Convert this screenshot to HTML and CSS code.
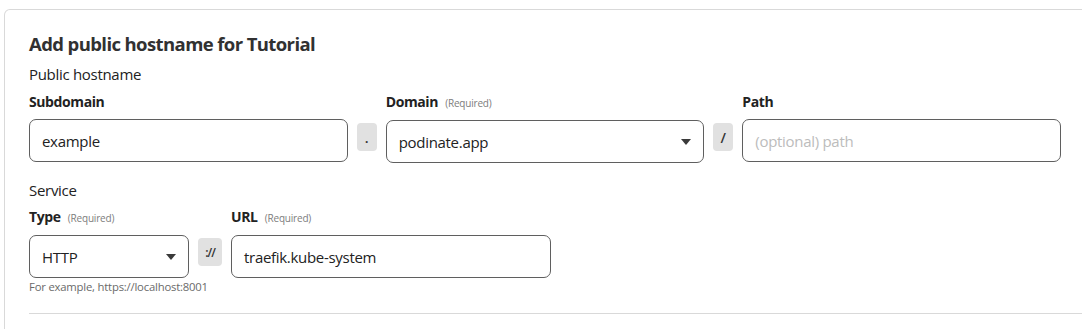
FILE: index.html
```html
<!DOCTYPE html>
<html lang="en">
<head>
  <meta charset="UTF-8" />
  <title>Add public hostname</title>
  <link rel="stylesheet" href="styles.css">
</head>
<body>
  <div class="card">
    <h2 class="card-title">Add public hostname for Tutorial</h2>

    <div class="section-title">Public hostname</div>
    <div class="field-row hostname-row">
      <div class="field">
        <label class="field-label">Subdomain</label>
        <div class="input">example</div>
      </div>
      <div class="sep">.</div>
      <div class="field">
        <label class="field-label">Domain <span class="req">(Required)</span></label>
        <div class="input select">
          <span>podinate.app</span>
          <span class="caret"></span>
        </div>
      </div>
      <div class="sep">/</div>
      <div class="field">
        <label class="field-label">Path</label>
        <div class="input placeholder">(optional) path</div>
      </div>
    </div>

    <div class="section-title service-title">Service</div>
    <div class="field-row service-row">
      <div class="field type-field">
        <label class="field-label">Type <span class="req">(Required)</span></label>
        <div class="input select">
          <span>HTTP</span>
          <span class="caret"></span>
        </div>
        <div class="help">For example, https://localhost:8001</div>
      </div>
      <div class="sep sep-wide">://</div>
      <div class="field url-field">
        <label class="field-label">URL <span class="req">(Required)</span></label>
        <div class="input">traefik.kube-system</div>
      </div>
    </div>

    <hr class="divider">
  </div>
</body>
</html>
```

FILE: styles.css
```css
* {
  box-sizing: border-box;
}

body {
  margin: 0;
  background: #ffffff;
  font-family: 'Open Sans', 'Noto Sans', sans-serif;
  color: #222;
  overflow: hidden;
}

.card {
  margin: 9px 0 0 4px;
  width: 1120px;
  height: 320px;
  border: 1px solid #d9d9d9;
  border-bottom: none;
  border-radius: 6px 6px 0 0;
  padding: 22px 24px 0 24px;
}

.card-title {
  margin: 0;
  font-size: 18.5px;
  line-height: 24px;
  font-weight: 700;
  color: #313131;
  letter-spacing: -0.6px;
}

.section-title {
  margin-top: 8px;
  font-size: 15px;
  line-height: 20px;
  color: #222;
  letter-spacing: -0.3px;
}

.service-title {
  margin-top: 17px;
}

.field-row {
  display: flex;
  gap: 9px;
  width: 1032px;
}

.field {
  flex: 1;
  min-width: 0;
  display: flex;
  flex-direction: column;
}

.field-label {
  margin-top: 8px;
  font-size: 14px;
  line-height: 20px;
  font-weight: 700;
  color: #222;
  letter-spacing: -0.4px;
}

.req {
  margin-left: 4px;
  font-size: 10px;
  font-weight: 400;
  color: #7d7d7d;
  letter-spacing: -0.2px;
}

.input {
  margin-top: 7px;
  height: 43px;
  border: 1px solid #5f5f5f;
  border-radius: 7px;
  padding: 0 12px;
  display: flex;
  align-items: center;
  font-size: 15px;
  color: #222;
  letter-spacing: -0.3px;
}

.placeholder {
  color: #bcbcbc;
}

.select {
  justify-content: space-between;
}

.caret {
  width: 0;
  height: 0;
  border-left: 5px solid transparent;
  border-right: 5px solid transparent;
  border-top: 6px solid #3a3a3a;
}

.sep {
  align-self: flex-start;
  margin-top: 39px;
  width: 20px;
  height: 28px;
  border-radius: 4px;
  background: #e1e1e1;
  display: flex;
  align-items: center;
  justify-content: center;
  font-size: 14px;
  font-weight: 600;
  color: #333;
}

.sep-wide {
  width: 24px;
  font-size: 12px;
  letter-spacing: -1px;
}

.service-row .field-label {
  margin-top: 7px;
}

.service-row .input {
  margin-top: 7px;
}

.service-row .sep {
  margin-top: 38px;
}

.type-field {
  flex: 0 0 160px;
}

.url-field {
  flex: 0 0 320px;
}

.help {
  margin-top: 1px;
  font-size: 11.3px;
  line-height: 16px;
  color: #6a6a6a;
  letter-spacing: -0.2px;
  white-space: nowrap;
}

.divider {
  margin: 18px 0 0 0;
  width: 1100px;
  border: none;
  border-top: 1px solid #d9d9d9;
}
```
